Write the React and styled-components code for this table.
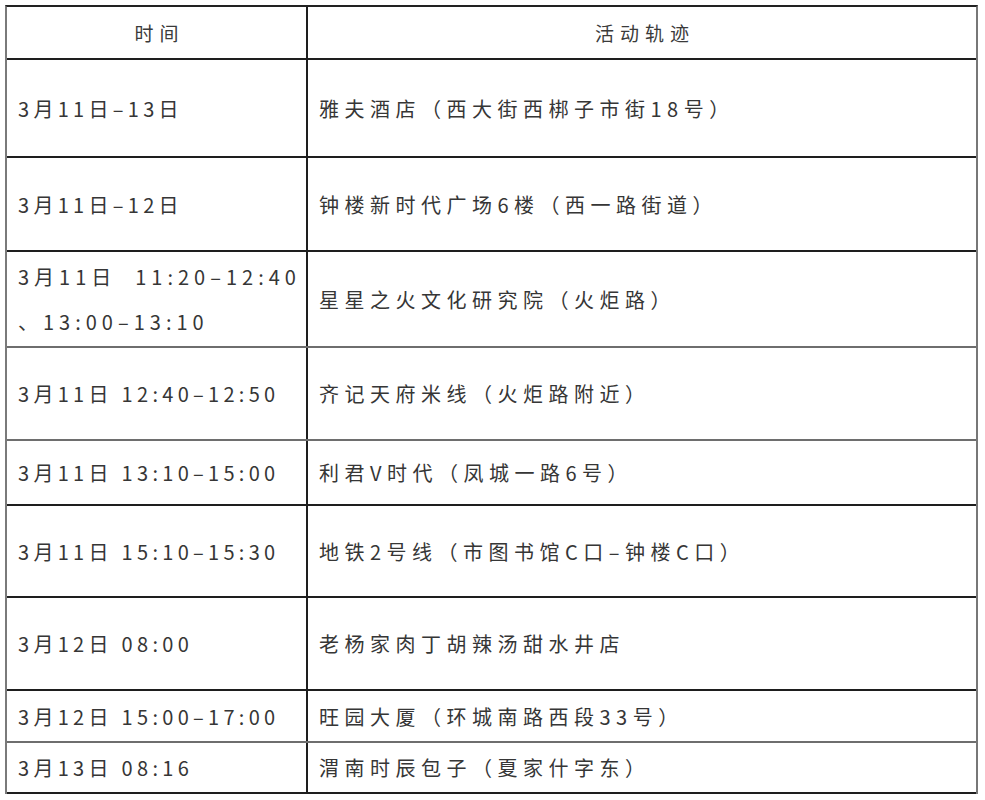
import React from 'react'
import styled, { createGlobalStyle } from 'styled-components'

const rows = [
  { h: 98, line: 'dark', time: ['3月11日–13日'], place: '雅夫酒店（西大街西梆子市街18号）' },
  { h: 94, line: 'dark', time: ['3月11日–12日'], place: '钟楼新时代广场6楼（西一路街道）' },
  { h: 96, line: 'light', time: ['3月11日\u00a0\u00a011:20–12:40', '、13:00–13:10'], place: '星星之火文化研究院（火炬路）', wide: true },
  { h: 93, line: 'light', time: ['3月11日\u00a012:40–12:50'], place: '齐记天府米线（火炬路附近）' },
  { h: 65, line: 'dark', time: ['3月11日\u00a013:10–15:00'], place: '利君V时代（凤城一路6号）' },
  { h: 92, line: 'dark', time: ['3月11日\u00a015:10–15:30'], place: '地铁2号线（市图书馆C口–钟楼C口）' },
  { h: 93, line: 'dark', time: ['3月12日\u00a008:00'], place: '老杨家肉丁胡辣汤甜水井店' },
  { h: 52, line: 'light', time: ['3月12日\u00a015:00–17:00'], place: '旺园大厦（环城南路西段33号）' },
  { h: 51, line: 'dark', time: ['3月13日\u00a008:16'], place: '渭南时辰包子（夏家什字东）' },
]

//Component
function App() {
  return (
    <>
      <GlobalStyle />
      <Table>
        <Row $h={53} $line="dark">
          <HeadCell $divider>时间</HeadCell>
          <HeadCell>活动轨迹</HeadCell>
        </Row>
        {rows.map((r, i) => (
          <Row key={i} $h={r.h} $line={r.line}>
            <Cell $divider $spacing={r.wide ? 5 : 4.3}>
              {r.time.map((t, j) => (
                <Line key={j}>{t}</Line>
              ))}
            </Cell>
            <Cell $spacing={5.5}>
              <Line>{r.place}</Line>
            </Cell>
          </Row>
        ))}
      </Table>
    </>
  )
}

//Styling
const GlobalStyle = createGlobalStyle`
  html, body {
    margin: 0;
    padding: 0;
    background: #fff;
  }
  body {
    font-family: "Noto Sans CJK SC", "Noto Sans", sans-serif;
    color: #333;
  }
`

const Table = styled.div`
  width: 973px;
  margin: 5px 0 0 5px;
  box-sizing: border-box;
  border-top: 2px solid #222;
  border-left: 2px solid #7a7a7a;
  border-right: 2px solid #777;
`

const Row = styled.div`
  display: grid;
  grid-template-columns: 301px 1fr;
  height: ${(p) => p.$h}px;
  box-sizing: border-box;
  border-bottom: 2px solid ${(p) => (p.$line === 'dark' ? '#1e1e1e' : '#6e6e6e')};
`

const HeadCell = styled.div`
  display: flex;
  align-items: center;
  justify-content: center;
  font-size: 19px;
  letter-spacing: 6px;
  padding-left: 6px;
  color: #3a3a3a;
  box-sizing: border-box;
  border-right: ${(p) => (p.$divider ? '2px solid #1e1e1e' : 'none')};
`

const Cell = styled.div`
  display: flex;
  flex-direction: column;
  justify-content: center;
  padding-left: 11px;
  font-size: 20px;
  line-height: 45px;
  letter-spacing: ${(p) => p.$spacing}px;
  color: #363636;
  white-space: nowrap;
  overflow: hidden;
  box-sizing: border-box;
  border-right: ${(p) => (p.$divider ? '2px solid #1e1e1e' : 'none')};
`

const Line = styled.div``

export default App
